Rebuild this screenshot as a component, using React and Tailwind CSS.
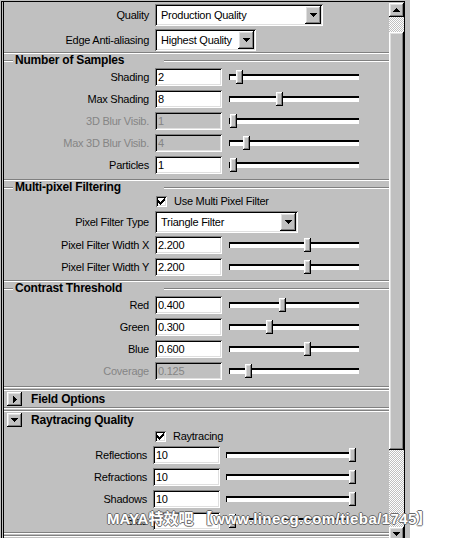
import React from 'react';

const sunken = 'shadow-[inset_1px_1px_0_#808080,inset_-1px_-1px_0_#ffffff,inset_2px_2px_0_#000000,inset_-2px_-2px_0_#dfdfdf]';
const raised = 'shadow-[inset_-1px_-1px_0_#000000,inset_1px_1px_0_#ffffff,inset_-2px_-2px_0_#808080,inset_2px_2px_0_#dfdfdf]';
const checker = 'bg-[repeating-conic-gradient(#ffffff_0_25%,#c0c0c0_0_50%)] bg-[length:2px_2px]';

function Etched({ className = '' }) {
    return <div className={`h-[2px] border-t border-b border-t-[#808080] border-b-white ${className}`} />;
}

function ArrowDown() {
    return (
        <svg width="7" height="4" viewBox="0 0 7 4" shapeRendering="crispEdges">
            <rect x="0" y="0" width="7" height="1" fill="#000" />
            <rect x="1" y="1" width="5" height="1" fill="#000" />
            <rect x="2" y="2" width="3" height="1" fill="#000" />
            <rect x="3" y="3" width="1" height="1" fill="#000" />
        </svg>
    );
}

function ArrowUp() {
    return (
        <svg width="7" height="4" viewBox="0 0 7 4" shapeRendering="crispEdges">
            <rect x="3" y="0" width="1" height="1" fill="#000" />
            <rect x="2" y="1" width="3" height="1" fill="#000" />
            <rect x="1" y="2" width="5" height="1" fill="#000" />
            <rect x="0" y="3" width="7" height="1" fill="#000" />
        </svg>
    );
}

function ArrowRight() {
    return (
        <svg width="4" height="7" viewBox="0 0 4 7" shapeRendering="crispEdges">
            <rect x="0" y="0" width="1" height="7" fill="#000" />
            <rect x="1" y="1" width="1" height="5" fill="#000" />
            <rect x="2" y="2" width="1" height="3" fill="#000" />
            <rect x="3" y="3" width="1" height="1" fill="#000" />
        </svg>
    );
}

function CheckMark() {
    return (
        <svg width="7" height="7" viewBox="0 0 7 7" shapeRendering="crispEdges">
            <path d="M0 2h1v1h1v1h1v-1h1v-1h1v-1h1v-1h1v3h-1v1h-1v1h-1v1h-1v1h-1v-1h-1v-1h-1v-1h-1z" fill="#000" />
        </svg>
    );
}

function Label({ children, disabled, w = 'w-[145px]' }) {
    return (
        <div className={`${w} shrink-0 text-right whitespace-nowrap ${disabled ? 'text-[#858585]' : 'text-black'}`}>
            {children}
        </div>
    );
}

function Dropdown({ value, w }) {
    return (
        <div className={`ml-[6px] flex h-[22px] ${w} items-stretch bg-white p-[2px] ${sunken}`}>
            <div className="flex-1 overflow-hidden pl-[4px] leading-[18px] whitespace-nowrap">{value}</div>
            <div className={`flex w-[16px] items-center justify-center bg-[#c0c0c0] ${raised}`}>
                <ArrowDown />
            </div>
        </div>
    );
}

function Slider({ pos, ml = 'ml-[7px]' }) {
    return (
        <div className={`relative flex h-[22px] w-[130px] shrink-0 items-center ${ml}`}>
            <div className="h-[6px] w-full border-t-2 border-l border-t-black border-l-black bg-white" />
            <div className={`absolute top-[4px] h-[14px] w-[7px] bg-[#c0c0c0] ${raised}`} style={{ left: pos }} />
        </div>
    );
}

function NumRow({ label, value, pos, disabled, tight }) {
    return (
        <div className="flex h-[22px] items-center">
            <Label disabled={disabled} w={tight ? 'w-[143px]' : 'w-[145px]'}>{label}</Label>
            <div className={`ml-[6px] h-[18px] w-[67px] shrink-0 pl-[3px] leading-[18px] ${sunken} ${disabled ? 'bg-[#c0c0c0] text-[#858585]' : 'bg-white text-black'}`}>
                {value}
            </div>
            <Slider pos={pos} ml={tight ? 'ml-[6px]' : 'ml-[7px]'} />
        </div>
    );
}

function Header({ title }) {
    return (
        <div className="flex h-[11px] items-start">
            <Etched className="mt-[5px] w-[9px]" />
            <div className="w-[151px] pl-[2px] text-[12px] font-bold leading-[11px] tracking-[-0.2px] whitespace-nowrap">{title}</div>
            <Etched className="mt-[5px] flex-1" />
        </div>
    );
}

function Check({ label, pl, h = 'h-[17px]' }) {
    return (
        <div className={`flex ${h} items-center ${pl}`}>
            <div className={`flex h-[11px] w-[11px] items-center justify-center bg-white ${sunken}`}>
                <CheckMark />
            </div>
            <span className="ml-[7px]">{label}</span>
        </div>
    );
}

function FrameRow({ title, open }) {
    return (
        <div className="flex h-[16px] items-center">
            <div className={`ml-[3px] flex h-[14px] w-[15px] shrink-0 items-center justify-center bg-[#c0c0c0] ${raised}`}>
                {open ? <ArrowDown /> : <ArrowRight />}
            </div>
            {title && <div className="ml-[9px] text-[12px] font-bold leading-[16px] tracking-[-0.2px]">{title}</div>}
        </div>
    );
}

const samples = [
    { label: 'Shading', value: '2', pos: 7 },
    { label: 'Max Shading', value: '8', pos: 47 },
    { label: '3D Blur Visib.', value: '1', pos: 1, disabled: true },
    { label: 'Max 3D Blur Visib.', value: '4', pos: 14, disabled: true },
    { label: 'Particles', value: '1', pos: 1 },
];

const contrast = [
    { label: 'Red', value: '0.400', pos: 50 },
    { label: 'Green', value: '0.300', pos: 37 },
    { label: 'Blue', value: '0.600', pos: 75 },
    { label: 'Coverage', value: '0.125', pos: 16, disabled: true },
];

const raytrace = [
    { label: 'Reflections', value: '10', pos: 123 },
    { label: 'Refractions', value: '10', pos: 123 },
    { label: 'Shadows', value: '10', pos: 123 },
    { label: 'Bias', value: '0', pos: 3 },
];

function Scrollbar() {
    return (
        <div className="flex h-full w-[15px] shrink-0 flex-col overflow-hidden">
            <div className="h-[1px] shrink-0" />
            <div className={`flex h-[14px] shrink-0 items-center justify-center bg-[#c0c0c0] ${raised}`}>
                <ArrowUp />
            </div>
            <div className={`h-[15px] shrink-0 ${checker}`} />
            <div className={`h-[418px] shrink-0 bg-[#c0c0c0] ${raised}`} />
            <div className={`h-[77px] shrink-0 ${checker}`} />
            <div className={`flex h-[14px] shrink-0 items-center justify-center bg-[#c0c0c0] ${raised}`}>
                <ArrowDown />
            </div>
        </div>
    );
}

export default function App() {
    return (
        <div className="relative h-[538px] w-[456px] overflow-hidden bg-white font-['Liberation_Sans',Arial,sans-serif] text-[11px] tracking-[-0.25px] text-black">
            <div className="h-full w-[410px] bg-[#c0c0c0] pt-[1px] pl-[1px]">
                <div className="flex h-[537px] w-[404px] border-t border-r border-l border-black">
                    <div className="h-full w-[387px] shrink-0 overflow-hidden pl-[1px]">
                        <div className="h-full border-l border-black">
                            {/* render quality */}
                            <div className="pt-[2px]">
                                <div className="flex h-[22px] items-center">
                                    <Label>Quality</Label>
                                    <Dropdown value="Production Quality" w="w-[168px]" />
                                </div>
                                <div className="mt-[3px] flex h-[22px] items-center">
                                    <Label>Edge Anti-aliasing</Label>
                                    <Dropdown value="Highest Quality" w="w-[101px]" />
                                </div>
                                <Etched className="mt-[1px]" />
                            </div>

                            {/* Number of Samples */}
                            <div className="mt-[1px]">
                                <Header title="Number of Samples" />
                                {samples.map(r => <NumRow key={r.label} {...r} />)}
                                <Etched className="mt-[3px]" />
                            </div>

                            {/* Multi-pixel Filtering */}
                            <div className="mt-[1px]">
                                <Header title="Multi-pixel Filtering" />
                                <Check label="Use Multi Pixel Filter" pl="pl-[152px]" />
                                <div className="flex h-[24px] items-center">
                                    <Label>Pixel Filter Type</Label>
                                    <Dropdown value="Triangle Filter" w="w-[143px]" />
                                </div>
                                <NumRow label="Pixel Filter Width X" value="2.200" pos={75} />
                                <NumRow label="Pixel Filter Width Y" value="2.200" pos={75} />
                                <Etched className="mt-[2px]" />
                            </div>

                            {/* Contrast Threshold */}
                            <div className="mt-[1px]">
                                <Header title="Contrast Threshold" />
                                {contrast.map(r => <NumRow key={r.label} {...r} />)}
                                <Etched className="mt-[4px]" />
                                <Etched className="mt-[1px]" />
                            </div>

                            <FrameRow title="Field Options" />
                            <Etched />
                            <Etched className="mt-[1px]" />

                            <FrameRow title="Raytracing Quality" open />
                            <Check label="Raytracing" pl="pl-[151px]" h="h-[16px]" />
                            {raytrace.map(r => <NumRow key={r.label} {...r} tight />)}
                            <Etched />
                            <Etched className="mt-[1px]" />
                            <FrameRow />
                        </div>
                    </div>
                    <Scrollbar />
                </div>
            </div>

            {/* watermark */}
            <div className="absolute top-[511px] left-[107px] font-['Liberation_Sans','Noto_Sans_CJK_SC',sans-serif] text-[15px] leading-[15px] font-bold tracking-normal whitespace-nowrap text-white [text-shadow:1px_0_0_#6a6a6a,-1px_0_0_#6a6a6a,0_1px_0_#6a6a6a,0_-1px_0_#6a6a6a]">
                MAYA特效吧 <span className="tracking-[0.4px]">【www.linecg.com/tieba/1745】</span>
            </div>
        </div>
    );
}
